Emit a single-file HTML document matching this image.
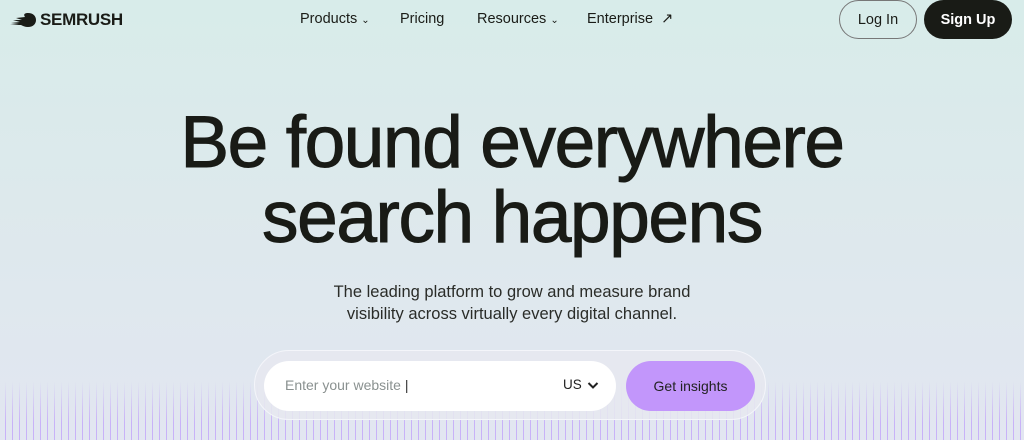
<!DOCTYPE html>
<html><head><meta charset="utf-8"><style>
*{margin:0;padding:0;box-sizing:border-box}
body{width:1024px;height:440px;overflow:hidden;font-family:"Liberation Sans",sans-serif;color:#1a1c17;
background:linear-gradient(180deg,#d8ecea 0%,#dde9ec 45%,#e2e6f1 100%);position:relative}
.stripes{position:absolute;left:0;right:0;top:382px;bottom:0;
background:repeating-linear-gradient(90deg,transparent 0 5px,rgba(190,155,250,.7) 5px 6px,transparent 6px 7px);
-webkit-mask:linear-gradient(180deg,transparent,#000 70%);mask:linear-gradient(180deg,transparent,#000 70%)}
.logo{position:absolute;left:8px;top:10px;display:flex;align-items:center;font-weight:700;font-size:17px;letter-spacing:-.3px}
.nav{position:absolute;top:11px;font-size:14.5px;color:#1a1c17}
.btn{position:absolute;top:0;height:39px;border-radius:20px;font-size:14.5px;display:flex;align-items:center;justify-content:center}
h1{position:absolute;left:0;right:0;top:105px;text-align:center;font-size:73px;font-weight:400;line-height:75px;letter-spacing:-1.4px;color:#191b16;-webkit-text-stroke:1px #191b16}
.sub{position:absolute;left:0;right:0;top:281px;text-align:center;font-size:16.5px;line-height:22px;color:#2a2c28}
.box{position:absolute;left:254px;top:350px;width:512px;height:70px;border-radius:35px;background:rgba(230,232,240,.85);border:1px solid #f4f5fa}
.inp{position:absolute;left:264px;top:361px;width:352px;height:50px;border-radius:25px;background:#fff}
.go{position:absolute;left:626px;top:361px;width:129px;height:50px;border-radius:25px;background:#c296fb;display:flex;align-items:center;justify-content:center;font-size:14px;color:#222}
</style></head><body>
<div class="stripes"></div>
<div class="logo"><svg width="30" height="18" viewBox="0 0 30 18"><path d="M20 2c5 0 8 3 8 7s-3 7-8 7c-3 0-5-1-7-2H2l9-1-8-1 9-1-7-2 9 0-6-2 9-1C15 3 17 2 20 2z" fill="#1a1c17"/></svg><span style="margin-left:2px">SEMRUSH</span></div>
<div class="nav" style="left:300px">Products <span style="font-size:10px">&#8964;</span></div>
<div class="nav" style="left:400px">Pricing</div>
<div class="nav" style="left:477px">Resources <span style="font-size:10px">&#8964;</span></div>
<div class="nav" style="left:587px">Enterprise &nbsp;&#8599;</div>
<div class="btn" style="left:839px;width:78px;border:1px solid #777">Log In</div>
<div class="btn" style="left:924px;width:88px;background:#191b16;color:#fff;font-weight:700">Sign Up</div>
<h1>Be found everywhere<br>search happens</h1>
<div class="sub">The leading platform to grow and measure brand<br>visibility across virtually every digital channel.</div>
<div class="box"></div>
<div class="inp"><span style="position:absolute;left:21px;top:16px;font-size:14px;color:#8a9190">Enter your website <span style="color:#333">|</span></span>
<span style="position:absolute;left:299px;top:16px;font-size:13.5px;color:#222">US</span>
<svg style="position:absolute;left:323px;top:20px" width="12" height="9" viewBox="0 0 12 9"><path d="M1.5 2l4.5 4.5L10.5 2" stroke="#222" stroke-width="2" fill="none"/></svg></div>
<div class="go">Get insights</div>
</body></html>
